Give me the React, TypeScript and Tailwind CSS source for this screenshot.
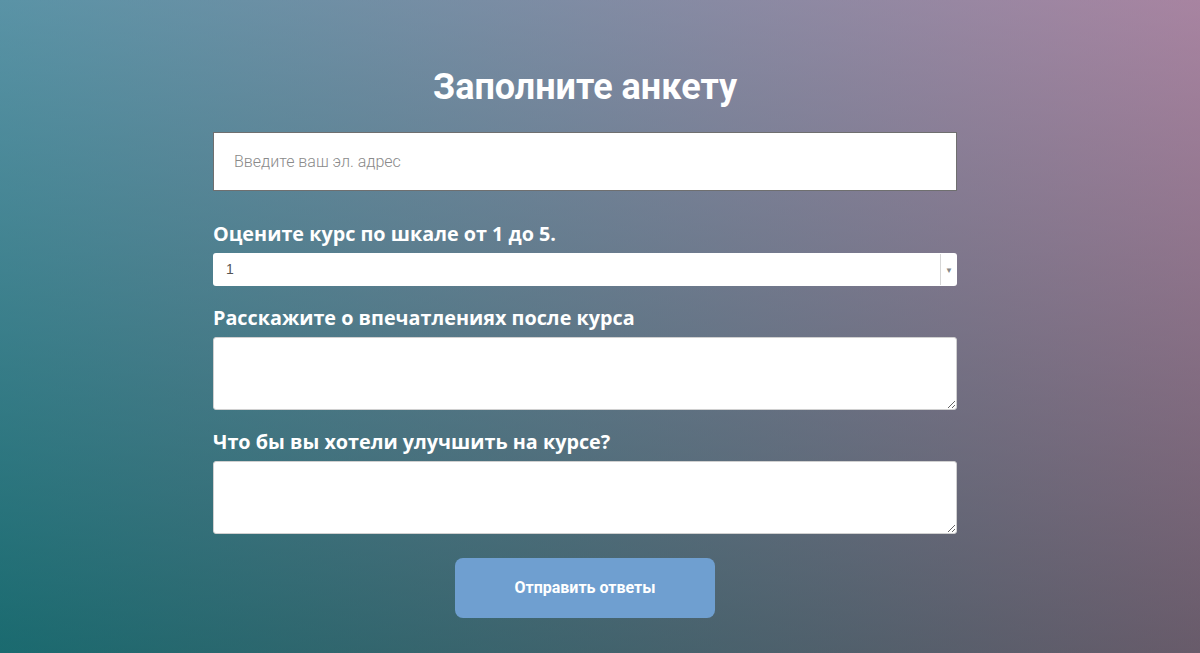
export default function App() {
  return (
    <div className="min-h-screen w-full bg-[linear-gradient(to_right,rgba(40,140,150,0.5),rgba(195,110,140,0.5)),linear-gradient(to_bottom,#8c9ab6,#0c4848)] pr-[30px] pt-[62px] pb-[35px]">
      <form
        className="mx-auto flex w-[744px] flex-col"
        onSubmit={(e) => e.preventDefault()}
      >
        <h1 className="text-center font-['Roboto',sans-serif] text-[36px] font-bold leading-[50px] text-white">
          Заполните анкету
        </h1>

        <input
          type="email"
          placeholder="Введите ваш эл. адрес"
          className="mt-[20px] h-[59px] w-full border border-[#6f6f6f] bg-white px-[20px] font-['Roboto',sans-serif] text-[16px] font-light text-[#333] outline-none placeholder:text-[#8a8a8a]"
        />

        <label className="mt-[29px] font-['Open_Sans',sans-serif] text-[19.8px] font-bold leading-[28px] text-white">
          Оцените курс по шкале от 1 до 5.
        </label>
        <div className="mt-[5px] flex h-[33px] w-full items-stretch rounded-[3px] bg-white">
          <span className="flex flex-1 items-center pl-[13px] font-[Arial,'Liberation_Sans',sans-serif] text-[14px] text-[#555]">
            1
          </span>
          <span className="my-[1px] flex w-[17px] items-center justify-center border-l border-[#d6d6d6] text-[8px] text-[#888]">
            ▼
          </span>
        </div>

        <label className="mt-[18px] font-['Open_Sans',sans-serif] text-[19.8px] font-bold leading-[28px] text-white">
          Расскажите о впечатлениях после курса
        </label>
        <textarea className="mt-[5px] block h-[73px] w-full rounded-[3px] border border-[#d0d0d0] bg-white p-2 font-['Roboto',sans-serif] text-[14px] outline-none" />

        <label className="mt-[18px] font-['Open_Sans',sans-serif] text-[19.8px] font-bold leading-[28px] text-white">
          Что бы вы хотели улучшить на курсе?
        </label>
        <textarea className="mt-[5px] block h-[73px] w-full rounded-[3px] border border-[#d0d0d0] bg-white p-2 font-['Roboto',sans-serif] text-[14px] outline-none" />

        <button
          type="submit"
          className="mx-auto mt-[24px] h-[60px] w-[260px] rounded-[8px] bg-[#6f9fd0] font-['Roboto',sans-serif] text-[16px] font-bold text-white"
        >
          Отправить ответы
        </button>
      </form>
    </div>
  );
}
